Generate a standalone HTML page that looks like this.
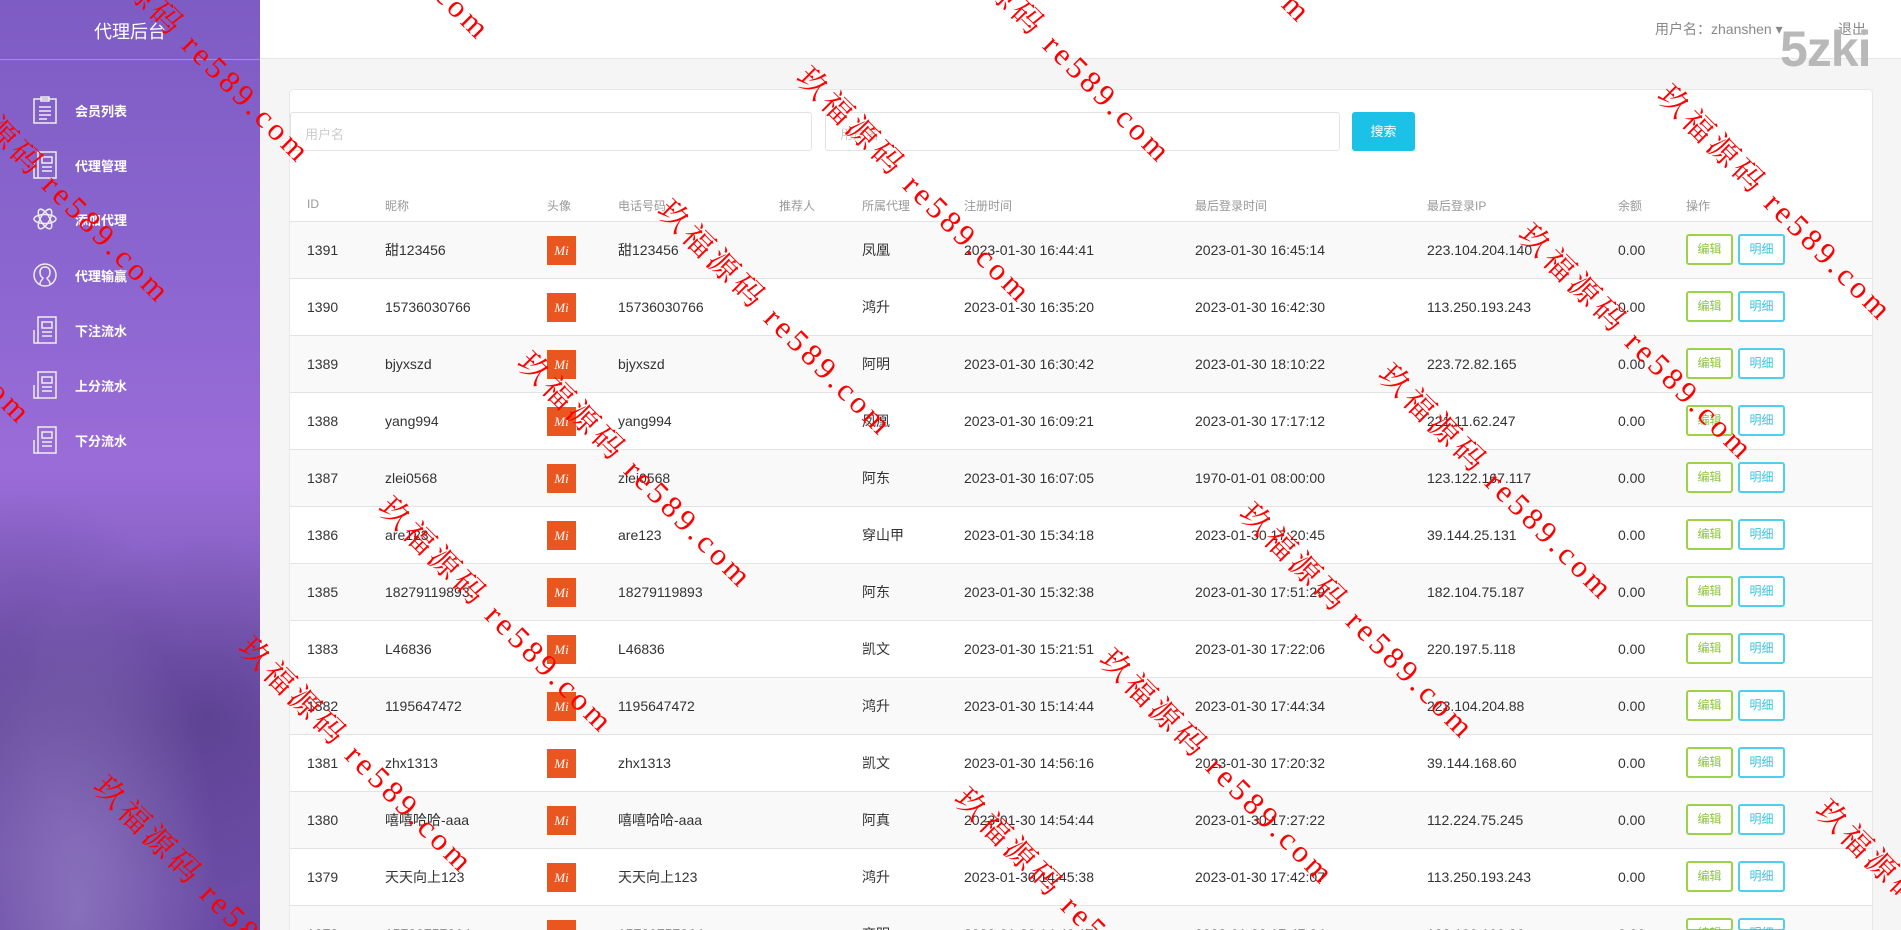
<!DOCTYPE html>
<html style="width:1901px;height:930px;overflow:hidden"><head><meta charset="utf-8"><style>
*{margin:0;padding:0;box-sizing:border-box}
html,body{width:1901px;height:930px;overflow:hidden}
body{background:#f5f5f5;font-family:"Liberation Sans","Noto Sans CJK SC",sans-serif;position:relative;color:#333}
.side{position:absolute;left:0;top:0;width:260px;height:930px;background:linear-gradient(180deg,#7d5cc3 0%,#8c66d0 30%,#9a6cd8 50%,#8862c4 62%,#7455ac 78%,#6a4aa5 100%);overflow:hidden}
.side .fog{position:absolute;left:0;bottom:0;width:260px;height:430px;background:radial-gradient(ellipse at 30% 95%,rgba(190,180,225,.35),transparent 55%),radial-gradient(ellipse at 80% 50%,rgba(50,30,100,.35),transparent 60%),radial-gradient(ellipse at 10% 40%,rgba(60,40,110,.3),transparent 50%)}
.side h1{position:absolute;top:18px;width:260px;text-align:center;color:#fff;font-size:18px;font-weight:normal}
.side .line{position:absolute;top:59px;left:0;width:260px;height:1px;background:rgba(255,255,255,.3)}
.mi{position:absolute;left:33px;width:220px;height:26px;color:#fff;font-size:13px;font-weight:bold}
.mi svg{position:absolute;left:0;top:0}
.mi span{position:absolute;left:42px;top:5px}
.top{position:absolute;left:260px;top:0;width:1641px;height:59px;background:#fff;border-bottom:1px solid #e6e6e6}
.user{position:absolute;left:1655px;top:19px;font-size:14px;color:#888}
.out{position:absolute;left:1838px;top:19px;font-size:14px;color:#888}
.zki{position:absolute;left:1780px;top:20px;font-size:50px;line-height:58px;font-weight:bold;color:#b8b8b8;letter-spacing:-1px}
.card{position:absolute;left:289px;top:89px;width:1584px;height:841px;overflow:hidden;background:#fff;border:1px solid #e8e8e8;border-bottom:none;border-radius:4px 4px 0 0}
.inp{position:absolute;top:22px;height:39px;border:1px solid #e3e3e3;border-radius:3px;color:#ccc;font-size:13px;padding:11px 14px}
.btn{position:absolute;left:1062px;top:22px;width:63px;height:39px;background:#1cc1e8;color:#fff;border-radius:3px;font-size:13px;text-align:center;line-height:39px}
.hd{position:absolute;top:107px;left:0;width:1584px;height:25px;border-bottom:1px solid #e3e3e3;font-size:12px;color:#999}
.hd span,.r span{position:absolute}
.r{position:absolute;left:0;width:1584px;height:57px;border-bottom:1px solid #e3e3e3;font-size:14px;color:#333;line-height:57px;overflow:hidden}
.r:nth-child(odd){background:#f9f9f9}
.av{top:14px;width:29px;height:29px;background:#e9561f;color:#fff;font-style:italic;font-family:"Liberation Serif",serif;font-size:13px;line-height:29px;text-align:center}
.b1,.b2{top:12px;width:47px;height:31px;border:2px solid #9bd24a;border-radius:3px;color:#8cc63f;font-size:12px;line-height:27px;text-align:center;background:#fff}
.b2{border-color:#4fcfe9;color:#3cc4e4}
.c0{left:17px}.c1{left:95px}.c2{left:257px}.c3{left:328px}.c4{left:489px}.c5{left:572px}.c6{left:674px}.c7{left:905px}.c8{left:1137px}.c9{left:1328px}.c10{left:1396px}.c11{left:1448px}
.wmc{position:absolute;left:0;top:0;width:1901px;height:930px;overflow:hidden;z-index:10;pointer-events:none}
.wm{position:absolute;transform:rotate(45deg);transform-origin:0 0;color:#f00;font-family:"Liberation Serif","Noto Serif CJK SC",serif;font-size:31px;line-height:36px;letter-spacing:4px;white-space:nowrap}
</style></head><body>
<div class="side"><div class="fog"></div>
<h1>代理后台</h1><div class="line"></div>
<div class="mi" style="top:96px"><svg width="24" height="28" viewBox="0 0 24 28" fill="none" stroke="#eee" stroke-width="1.5"><rect x="1" y="3" width="22" height="24"/><rect x="8" y="1" width="8" height="4"/><path d="M6 11h12M6 15h12M6 19h12M6 23h8"/></svg><span>会员列表</span></div>
<div class="mi" style="top:151px"><svg width="24" height="28" viewBox="0 0 24 28" fill="none" stroke="#eee" stroke-width="1.5"><rect x="5" y="1" width="18" height="26"/><path d="M1 12v15h4M9 6h10v6H9zM9 16h10M9 20h10"/></svg><span>代理管理</span></div>
<div class="mi" style="top:205px"><svg width="24" height="28" viewBox="0 0 24 28" fill="none" stroke="#eee" stroke-width="1.5"><ellipse cx="12" cy="14" rx="11" ry="4.5"/><ellipse cx="12" cy="14" rx="11" ry="4.5" transform="rotate(60 12 14)"/><ellipse cx="12" cy="14" rx="11" ry="4.5" transform="rotate(-60 12 14)"/></svg><span>添加代理</span></div>
<div class="mi" style="top:261px"><svg width="24" height="28" viewBox="0 0 24 28" fill="none" stroke="#eee" stroke-width="1.5"><circle cx="12" cy="14" r="11"/><path d="M7 23c0-4 3-4 3-6-2-1-3-3-3-6 0-3 2-5 5-5s5 2 5 5c0 3-1 5-3 6 0 2 3 2 3 6"/></svg><span>代理输赢</span></div>
<div class="mi" style="top:316px"><svg width="24" height="28" viewBox="0 0 24 28" fill="none" stroke="#eee" stroke-width="1.5"><rect x="5" y="1" width="18" height="26"/><path d="M1 14v13h4M9 6h10v6H9zM9 16h10M9 20h10"/></svg><span>下注流水</span></div>
<div class="mi" style="top:371px"><svg width="24" height="28" viewBox="0 0 24 28" fill="none" stroke="#eee" stroke-width="1.5"><rect x="5" y="1" width="18" height="26"/><path d="M1 14v13h4M9 6h10v6H9zM9 16h10M9 20h10"/></svg><span>上分流水</span></div>
<div class="mi" style="top:426px"><svg width="24" height="28" viewBox="0 0 24 28" fill="none" stroke="#eee" stroke-width="1.5"><rect x="5" y="1" width="18" height="26"/><path d="M1 14v13h4M9 6h10v6H9zM9 16h10M9 20h10"/></svg><span>下分流水</span></div>
</div>
<div class="top"></div>
<div class="user">用户名：zhanshen ▾</div><div class="out">退出</div><div class="zki">5zki</div>
<div class="card">
<div class="inp" style="left:0;width:522px">用户名</div>
<div class="inp" style="left:535px;width:515px">用户名</div>
<div class="btn">搜索</div>
<div class="hd"><span class="c0">ID</span><span class="c1">昵称</span><span class="c2">头像</span><span class="c3">电话号码</span><span class="c4">推荐人</span><span class="c5">所属代理</span><span class="c6">注册时间</span><span class="c7">最后登录时间</span><span class="c8">最后登录IP</span><span class="c9">余额</span><span class="c10">操作</span></div>
<div style="position:absolute;left:0;top:132px;width:1584px;height:709px;overflow:hidden">
<div class="r" style="top:0"><span class="c0">1391</span><span class="c1">甜123456</span><span class="c2 av">Mi</span><span class="c3">甜123456</span><span class="c5">凤凰</span><span class="c6">2023-01-30 16:44:41</span><span class="c7">2023-01-30 16:45:14</span><span class="c8">223.104.204.140</span><span class="c9">0.00</span><span class="c10 b1">编辑</span><span class="c11 b2">明细</span></div>
<div class="r" style="top:57px"><span class="c0">1390</span><span class="c1">15736030766</span><span class="c2 av">Mi</span><span class="c3">15736030766</span><span class="c5">鸿升</span><span class="c6">2023-01-30 16:35:20</span><span class="c7">2023-01-30 16:42:30</span><span class="c8">113.250.193.243</span><span class="c9">0.00</span><span class="c10 b1">编辑</span><span class="c11 b2">明细</span></div>
<div class="r" style="top:114px"><span class="c0">1389</span><span class="c1">bjyxszd</span><span class="c2 av">Mi</span><span class="c3">bjyxszd</span><span class="c5">阿明</span><span class="c6">2023-01-30 16:30:42</span><span class="c7">2023-01-30 18:10:22</span><span class="c8">223.72.82.165</span><span class="c9">0.00</span><span class="c10 b1">编辑</span><span class="c11 b2">明细</span></div>
<div class="r" style="top:171px"><span class="c0">1388</span><span class="c1">yang994</span><span class="c2 av">Mi</span><span class="c3">yang994</span><span class="c5">凤凰</span><span class="c6">2023-01-30 16:09:21</span><span class="c7">2023-01-30 17:17:12</span><span class="c8">221.11.62.247</span><span class="c9">0.00</span><span class="c10 b1">编辑</span><span class="c11 b2">明细</span></div>
<div class="r" style="top:228px"><span class="c0">1387</span><span class="c1">zlei0568</span><span class="c2 av">Mi</span><span class="c3">zlei0568</span><span class="c5">阿东</span><span class="c6">2023-01-30 16:07:05</span><span class="c7">1970-01-01 08:00:00</span><span class="c8">123.122.167.117</span><span class="c9">0.00</span><span class="c10 b1">编辑</span><span class="c11 b2">明细</span></div>
<div class="r" style="top:285px"><span class="c0">1386</span><span class="c1">are123</span><span class="c2 av">Mi</span><span class="c3">are123</span><span class="c5">穿山甲</span><span class="c6">2023-01-30 15:34:18</span><span class="c7">2023-01-30 17:20:45</span><span class="c8">39.144.25.131</span><span class="c9">0.00</span><span class="c10 b1">编辑</span><span class="c11 b2">明细</span></div>
<div class="r" style="top:342px"><span class="c0">1385</span><span class="c1">18279119893</span><span class="c2 av">Mi</span><span class="c3">18279119893</span><span class="c5">阿东</span><span class="c6">2023-01-30 15:32:38</span><span class="c7">2023-01-30 17:51:29</span><span class="c8">182.104.75.187</span><span class="c9">0.00</span><span class="c10 b1">编辑</span><span class="c11 b2">明细</span></div>
<div class="r" style="top:399px"><span class="c0">1383</span><span class="c1">L46836</span><span class="c2 av">Mi</span><span class="c3">L46836</span><span class="c5">凯文</span><span class="c6">2023-01-30 15:21:51</span><span class="c7">2023-01-30 17:22:06</span><span class="c8">220.197.5.118</span><span class="c9">0.00</span><span class="c10 b1">编辑</span><span class="c11 b2">明细</span></div>
<div class="r" style="top:456px"><span class="c0">1382</span><span class="c1">1195647472</span><span class="c2 av">Mi</span><span class="c3">1195647472</span><span class="c5">鸿升</span><span class="c6">2023-01-30 15:14:44</span><span class="c7">2023-01-30 17:44:34</span><span class="c8">223.104.204.88</span><span class="c9">0.00</span><span class="c10 b1">编辑</span><span class="c11 b2">明细</span></div>
<div class="r" style="top:513px"><span class="c0">1381</span><span class="c1">zhx1313</span><span class="c2 av">Mi</span><span class="c3">zhx1313</span><span class="c5">凯文</span><span class="c6">2023-01-30 14:56:16</span><span class="c7">2023-01-30 17:20:32</span><span class="c8">39.144.168.60</span><span class="c9">0.00</span><span class="c10 b1">编辑</span><span class="c11 b2">明细</span></div>
<div class="r" style="top:570px"><span class="c0">1380</span><span class="c1">嘻嘻哈哈-aaa</span><span class="c2 av">Mi</span><span class="c3">嘻嘻哈哈-aaa</span><span class="c5">阿真</span><span class="c6">2023-01-30 14:54:44</span><span class="c7">2023-01-30 17:27:22</span><span class="c8">112.224.75.245</span><span class="c9">0.00</span><span class="c10 b1">编辑</span><span class="c11 b2">明细</span></div>
<div class="r" style="top:627px"><span class="c0">1379</span><span class="c1">天天向上123</span><span class="c2 av">Mi</span><span class="c3">天天向上123</span><span class="c5">鸿升</span><span class="c6">2023-01-30 14:45:38</span><span class="c7">2023-01-30 17:42:07</span><span class="c8">113.250.193.243</span><span class="c9">0.00</span><span class="c10 b1">编辑</span><span class="c11 b2">明细</span></div>
<div class="r" style="top:684px;height:25px;border-bottom:none"><span class="c0">1378</span><span class="c1">15730757364</span><span class="c2 av">Mi</span><span class="c3">15730757364</span><span class="c5">齐明</span><span class="c6">2023-01-30 14:40:15</span><span class="c7">2023-01-30 17:47:34</span><span class="c8">183.199.190.36</span><span class="c9">0.00</span><span class="c10 b1" style="height:13px">编辑</span><span class="c11 b2" style="height:13px">明细</span></div>
</div>
</div>
<div class="wmc">
<div class="wm" style="left:814px;top:60px">玖福源码 re589.com</div>
<div class="wm" style="left:675px;top:193px">玖福源码 re589.com</div>
<div class="wm" style="left:535px;top:345px">玖福源码 re589.com</div>
<div class="wm" style="left:396px;top:490px">玖福源码 re589.com</div>
<div class="wm" style="left:256px;top:630px">玖福源码 re589.com</div>
<div class="wm" style="left:111px;top:769px">玖福源码 re589.com</div>
<div class="wm" style="left:1675px;top:78px">玖福源码 re589.com</div>
<div class="wm" style="left:1536px;top:217px">玖福源码 re589.com</div>
<div class="wm" style="left:1396px;top:357px">玖福源码 re589.com</div>
<div class="wm" style="left:1257px;top:496px">玖福源码 re589.com</div>
<div class="wm" style="left:1117px;top:642px">玖福源码 re589.com</div>
<div class="wm" style="left:972px;top:781px">玖福源码 re589.com</div>
<div class="wm" style="left:1833px;top:793px">玖福源码 re589.com</div>
<div class="wm" style="left:-47px;top:60px">玖福源码 re589.com</div>
<div class="wm" style="left:-186px;top:181px">玖福源码 re589.com</div>
<div class="wm" style="left:93px;top:-80px">玖福源码 re589.com</div>
<div class="wm" style="left:954px;top:-80px">玖福源码 re589.com</div>
<div class="wm" style="left:273px;top:-203px">玖福源码 re589.com</div>
<div class="wm" style="left:1094px;top:-220px">玖福源码 re589.com</div>
</div>
</body></html>
